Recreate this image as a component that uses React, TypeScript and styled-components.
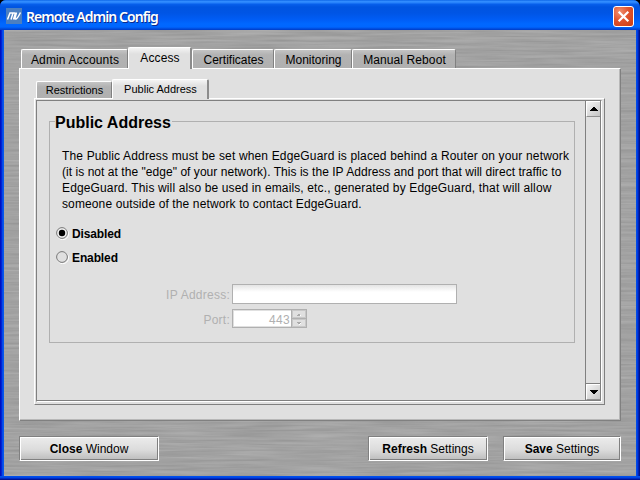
import React from "react";
import styled, { createGlobalStyle, css } from "styled-components";

const GlobalStyle = createGlobalStyle`
  *, *::before, *::after { box-sizing: border-box; }
  html, body { margin: 0; padding: 0; background: #000; overflow: hidden; }
  body { font-family: "Liberation Sans", Arial, sans-serif; font-size: 12px; color: #000; }
`;

const Window = styled.main`
  display: flex;
  flex-direction: column;
  width: 640px;
  height: 480px;
  border-radius: 6px 7px 0 0;
  overflow: hidden;
  background: linear-gradient(90deg, #0010b8 0, #0010c8 1px, #0037e0 2px, #0a5af0 3px, #0054e8 4px, #0054e8 636px, #0044e8 637px, #0030d8 638px, #001590 639px, #001080 640px);
`;

const TitleBar = styled.header`
  display: flex;
  align-items: flex-start;
  height: 30px;
  padding: 6px 6px 0;
  background: linear-gradient(180deg, #0058e0 0, #3590ff 1px, #2580fa 3px, #0860ec 4px, #0054e0 7px, #0055e5 13px, #005cf4 19px, #0068ff 24px, #0066fe 27px, #0048d8 29px, #003cc4 30px);
`;

const AppIcon = styled.svg`
  width: 16px;
  height: 16px;
  flex: none;
  margin-top: 2px;
`;

const Title = styled.h1`
  flex: 1;
  margin: 1px 0 0 4px;
  font: 600 14px/20px "Noto Sans", sans-serif;
  letter-spacing: -0.92px;
  color: #fff;
  text-shadow: 1px 1px 0 #0b2a8c;
  white-space: nowrap;
`;

const CloseButton = styled.button`
  display: grid;
  place-items: center;
  width: 21px;
  height: 21px;
  padding: 0;
  border: 1px solid #fff;
  border-radius: 3px;
  background: radial-gradient(circle at 30% 25%, #f09070 0, #e0532e 45%, #cc3c10 100%);
`;

const Client = styled.div`
  position: relative;
  flex: 1;
  display: flex;
  flex-direction: column;
  margin: 0 4px;
  padding: 17px 15px 0;
  background: #a3a3a3;
`;

const Grain = styled.svg`
  position: absolute;
  inset: 0;
  width: 632px;
  height: 446px;
`;

const BottomEdge = styled.div`
  height: 4px;
  background: linear-gradient(180deg, #0054f0 0, #0040e0 2px, #0018a8 3px, #001080 4px);
`;

const TabRow = styled.div<{ $inner?: boolean }>`
  position: relative;
  z-index: 1;
  display: flex;
  align-items: flex-end;
  height: ${(p) => (p.$inner ? 20 : 22)}px;
  padding-left: 2px;
  margin-bottom: -1px;
`;

const Tab = styled.button<{ $w: number; $active?: boolean; $inner?: boolean; $ls?: number }>`
  width: ${(p) => p.$w}px;
  height: ${(p) => (p.$inner ? 17 : 19)}px;
  margin: 0 0 1px;
  padding: ${(p) => (p.$inner ? "0 0 1px 1px" : "1px 0 0 1px")};
  border: 1px solid #fff;
  border-right-color: #808080;
  border-bottom: 0;
  border-radius: 2px 2px 0 0;
  background: linear-gradient(180deg, #c4c4c4 0, #b2b2b2 5px, #b0b0b0 100%);
  font: ${(p) => (p.$inner ? 11 : 12)}px/14px "Liberation Sans", Arial, sans-serif;
  letter-spacing: ${(p) => p.$ls ?? 0}px;
  color: #000;
  white-space: nowrap;
  ${(p) =>
    p.$active &&
    css`
      height: ${p.$inner ? 20 : 22}px;
      margin: 0;
      padding: 0 0 2px 1px;
      border-right: 2px solid #8c8c8c;
      background: linear-gradient(180deg, #f4f4f4 0, #e0e0e0 6px);
    `}
`;

const OuterPanel = styled.section`
  position: relative;
  display: flex;
  flex-direction: column;
  width: 602px;
  height: 353px;
  padding: 10px 15px 0 14px;
  border: 1px solid #fff;
  border-right-color: #808080;
  border-bottom-color: #808080;
  box-shadow: inset -1px -1px 0 #b8b8b8;
  background: #e0e0e0;
`;

const InnerPanel = styled.div`
  width: 571px;
  height: 307px;
  border: 1px solid #fff;
  border-right-color: #808080;
  border-bottom-color: #808080;
  padding: 1px;
  background: #e0e0e0;
`;

const Viewport = styled.div`
  display: flex;
  width: 566px;
  height: 302px;
  border: 1px solid #808080;
  border-right-color: #fff;
  border-bottom: 1px solid #fff;
  box-shadow: inset 0 -1px 0 #808080;
`;

const Content = styled.div`
  flex: 1;
  padding: 10px 9px 0 12px;
`;

const Group = styled.fieldset`
  width: 526px;
  height: 232px;
  margin: 0;
  padding: 17px 0 0 6px;
  border: 1px solid #b0b0b0;
`;

const Legend = styled.legend`
  height: 20px;
  margin-left: -1px;
  padding: 2px 1px 0 0;
  font: bold 16px/18px "Liberation Sans", Arial, sans-serif;
  line-height: 20px;
`;

const Description = styled.p`
  margin: 0 0 9px 6px;
  line-height: 16px;
`;

const Line = styled.span<{ $ls: number }>`
  display: block;
  letter-spacing: ${(p) => p.$ls}px;
  white-space: nowrap;
`;

const RadioRow = styled.label`
  display: flex;
  align-items: center;
  gap: 3px;
  height: 24px;
  line-height: 16px;
  font-weight: bold;
  letter-spacing: -0.12px;
`;

const Form = styled.div`
  display: grid;
  grid-template-columns: 174px auto;
  column-gap: 2px;
  row-gap: 5px;
  margin-top: 15px;
  justify-content: start;
  align-items: center;
  color: #b0b0b0;
`;

const FieldLabel = styled.span`
  padding-top: 2px;
  text-align: right;
  letter-spacing: 0.25px;
  white-space: nowrap;
`;

const TextField = styled.div`
  width: 225px;
  height: 20px;
  border: 1px solid #b0b0b0;
  background: linear-gradient(180deg, #e4e4e4 0, #fff 7px);
`;

const Spinner = styled.div`
  display: flex;
  width: 75px;
  height: 19px;
  border: 1px solid #b0b0b0;
  background: #b0b0b0;
`;

const SpinnerValue = styled.div`
  flex: 1;
  padding-right: 1px;
  border: 1px solid #e0e0e0;
  border-right: 0;
  background: #fff;
  line-height: 18px;
  text-align: right;
  letter-spacing: 0.3px;
`;

const SpinnerButtons = styled.div`
  display: grid;
  grid-template-rows: 8px 8px;
  gap: 1px;
  width: 14px;
  margin-left: 1px;
`;

const SpinnerButton = styled.button`
  display: grid;
  place-items: center;
  padding: 0;
  border: 1px solid #c8c8c8;
  background: #e0e0e0;
`;

const ScrollBar = styled.div`
  display: flex;
  flex-direction: column;
  justify-content: space-between;
  width: 16px;
  height: 299px;
  border-left: 1px solid #808080;
  border-right: 1px solid #808080;
`;

const ScrollButton = styled.button<{ $down?: boolean }>`
  display: grid;
  place-items: center;
  width: 14px;
  height: 16px;
  padding: 0;
  border: 1px solid #fff;
  border-right: 0;
  border-bottom: 1px solid #909090;
  box-shadow: ${(p) => (p.$down ? "0 -1px 0 #808080" : "none")};
  background: linear-gradient(135deg, #f4f4f4, #c4c4c4);
`;

const Footer = styled.footer`
  position: relative;
  display: flex;
  margin-top: 15px;
`;

const ActionButton = styled.button<{ $w: number; $push?: number }>`
  width: ${(p) => p.$w}px;
  height: 25px;
  margin-left: ${(p) => p.$push ?? 0}px;
  padding: 1px 0 0;
  border: 1px solid #808080;
  border-right-color: #fff;
  border-bottom-color: #fff;
  box-shadow: inset 1px 1px 0 #fff, inset -1px -1px 0 #808080;
  background: linear-gradient(180deg, #ececec 0, #dcdcdc 55%, #bcbcbc 100%);
  font: 12px/20px "Liberation Sans", Arial, sans-serif;
  color: #000;
  white-space: nowrap;
`;

function Radio({ checked }: { checked?: boolean }) {
  return (
    <svg width="13" height="13" viewBox="0 0 13 13">
      <circle cx="6.7" cy="6.9" r="5.8" fill="none" stroke="#fff" />
      <circle cx="6" cy="6" r="5.4" fill={checked ? "#eee" : "#e0e0e0"} stroke="#777" />
      {checked && <circle cx="6" cy="6" r="3.2" fill="#000" />}
    </svg>
  );
}

const RadioText = styled.span`
  padding-top: 1px;
`;

function Arrow({ down, small }: { down?: boolean; small?: boolean }) {
  return small ? (
    <svg width="4" height="3" viewBox="0 0 4 3" shapeRendering="crispEdges">
      <path d={down ? "M0 0h4v1h-1v1h-2v-1h-1z" : "M1 1h2v1h1v1h-4v-1h1z"} fill="#aaa" />
      <path d={down ? "M3 1h1v1h-2v1h1v-1z" : "M3 2h1v1h-2z"} fill="#fff" />
    </svg>
  ) : (
    <svg width="8" height="4" viewBox="0 0 8 4" shapeRendering="crispEdges">
      <path d={down ? "M0 0h8v1h-1v1h-1v1h-1v1h-2v-1h-1v-1h-1v-1h-1z" : "M3 0h2v1h1v1h1v1h1v1h-8v-1h1v-1h1v-1h1z"} />
    </svg>
  );
}

const lines = [
  { text: "The Public Address must be set when EdgeGuard is placed behind a Router on your network", ls: 0.155 },
  { text: "(it is not at the \"edge\" of your network). This is the IP Address and port that will direct traffic to", ls: 0.045 },
  { text: "EdgeGuard. This will also be used in emails, etc., generated by EdgeGuard, that will allow", ls: 0.135 },
  { text: "someone outside of the network to contact EdgeGuard.", ls: 0.12 },
];

export default function App() {
  return (
    <>
      <GlobalStyle />
      <Window>
        <TitleBar>
          <AppIcon viewBox="0 0 16 16">
            <rect width="16" height="16" fill="#4b7fc0" />
            <path d="M1.5 11.5L4 5H7L5 11.5M7 5H8.5Q9.5 5 9 6.5L7.5 11.5M10.5 4.5L9 10Q8.7 11.3 10 11Q11.5 10.5 14.5 4.5" fill="none" stroke="#fff" strokeWidth="1.5" />
          </AppIcon>
          <Title>Remote Admin Config</Title>
          <CloseButton aria-label="Close">
            <svg width="13" height="13" viewBox="0 0 13 13">
              <path d="M1.7 1.7L11.3 11.3M11.3 1.7L1.7 11.3" stroke="#fff" strokeWidth="2.2" />
            </svg>
          </CloseButton>
        </TitleBar>
        <Client>
          <Grain aria-hidden="true">
            <filter id="brushed" x="0" y="0" width="100%" height="100%" colorInterpolationFilters="sRGB">
              <feTurbulence type="fractalNoise" baseFrequency="0.014 0.4" numOctaves="3" seed="4" />
              <feColorMatrix values="0.13 0 0 0 0.57  0.13 0 0 0 0.57  0.13 0 0 0 0.57  0 0 0 0 1" />
            </filter>
            <rect width="632" height="446" filter="url(#brushed)" />
          </Grain>
          <TabRow>
            <Tab $w={107} $ls={0.15}>Admin Accounts</Tab>
            <Tab $w={64} $active $ls={0.1}>Access</Tab>
            <Tab $w={82}>Certificates</Tab>
            <Tab $w={78}>Monitoring</Tab>
            <Tab $w={104} $ls={0.1}>Manual Reboot</Tab>
          </TabRow>
          <OuterPanel>
            <TabRow $inner>
              <Tab $w={76} $inner>Restrictions</Tab>
              <Tab $w={97} $inner $active>Public Address</Tab>
            </TabRow>
            <InnerPanel>
              <Viewport>
                <Content>
                  <Group>
                    <Legend>Public Address</Legend>
                    <Description>
                      {lines.map((l) => (
                        <Line key={l.text} $ls={l.ls}>{l.text}</Line>
                      ))}
                    </Description>
                    <RadioRow><Radio checked /><RadioText>Disabled</RadioText></RadioRow>
                    <RadioRow><Radio /><RadioText>Enabled</RadioText></RadioRow>
                    <Form>
                      <FieldLabel>IP Address:</FieldLabel>
                      <TextField />
                      <FieldLabel>Port:</FieldLabel>
                      <Spinner>
                        <SpinnerValue>443</SpinnerValue>
                        <SpinnerButtons>
                          <SpinnerButton aria-label="Increase"><Arrow small /></SpinnerButton>
                          <SpinnerButton aria-label="Decrease"><Arrow small down /></SpinnerButton>
                        </SpinnerButtons>
                      </Spinner>
                    </Form>
                  </Group>
                </Content>
                <ScrollBar>
                  <ScrollButton aria-label="Scroll up"><Arrow /></ScrollButton>
                  <ScrollButton $down aria-label="Scroll down"><Arrow down /></ScrollButton>
                </ScrollBar>
              </Viewport>
            </InnerPanel>
          </OuterPanel>
          <Footer>
            <ActionButton $w={140}><b>Close</b> Window</ActionButton>
            <ActionButton $w={120} $push={209}><b>Refresh</b> Settings</ActionButton>
            <ActionButton $w={118} $push={15}><b>Save</b> Settings</ActionButton>
          </Footer>
        </Client>
        <BottomEdge />
      </Window>
    </>
  );
}
